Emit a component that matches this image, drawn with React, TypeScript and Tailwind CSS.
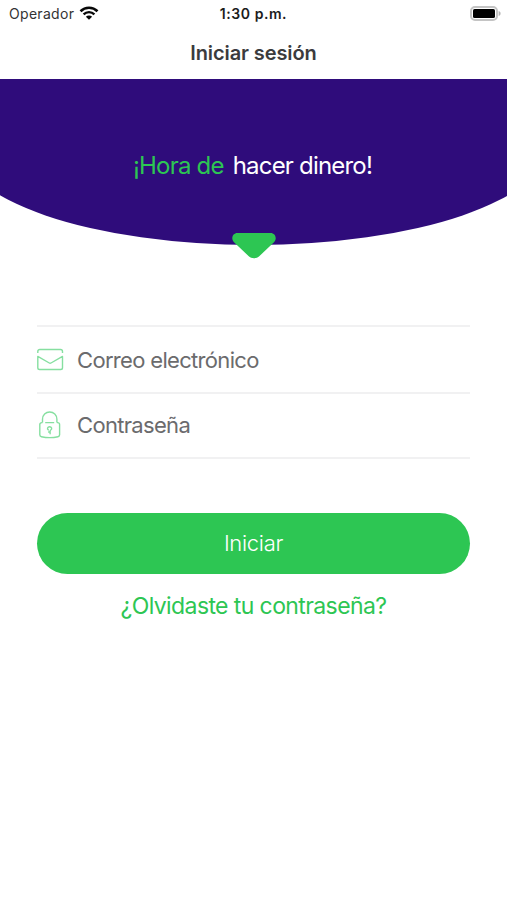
import type { ReactNode } from "react";

const fields = [
  { name: "email", label: "Correo electrónico", icon: <MailIcon />, row: "h-[67px]" },
  { name: "password", label: "Contraseña", icon: <LockIcon />, row: "h-[65px] pb-px" },
];

export default function App() {
  return (
    <main className="min-h-screen w-full overflow-hidden bg-white font-['Inter',sans-serif]">
      <StatusBar />

      <header className="flex h-[51px] items-center justify-center pb-[2px]">
        <h1 className="whitespace-nowrap text-[20px] font-semibold leading-6 tracking-[-0.1px] text-[#3b3b3d]">
          Iniciar sesión
        </h1>
      </header>

      <Hero />

      <form className="mx-[37px] mt-[80px]">
        <div className="border-t-2 border-[#f1f1f2]">
          {fields.map((field) => (
            <Field key={field.name} icon={field.icon} className={field.row}>
              {field.label}
            </Field>
          ))}
        </div>

        <button
          type="button"
          className="mt-[54px] flex h-[61px] w-full items-center justify-center rounded-full bg-[#2dc653] text-[22px] font-light tracking-[-0.3px] text-white"
        >
          Iniciar
        </button>

        <a
          href="#"
          className="mt-[16px] block whitespace-nowrap text-center text-[23px] leading-8 tracking-[-0.6px] text-[#2dc653]"
        >
          ¿Olvidaste tu contraseña?
        </a>
      </form>
    </main>
  );
}

function StatusBar() {
  return (
    <div className="grid h-7 grid-cols-3 items-center pl-[9px] pr-[6px] text-[14px] leading-none">
      <div className="flex items-center gap-[5px] text-[#333]">
        <span className="tracking-[0.3px]">Operador</span>
        <svg className="-mt-[2px]" width="20" height="14" viewBox="0 0 20 14" fill="none" aria-hidden="true">
          <path d="M1.5 5.2a12.2 12.2 0 0 1 17 0" stroke="#080808" strokeWidth="2.6" />
          <path d="M4.6 8.3a7.8 7.8 0 0 1 10.8 0" stroke="#080808" strokeWidth="2.4" />
          <path d="M10 13.8 6.9 10.7a4.4 4.4 0 0 1 6.2 0Z" fill="#080808" />
        </svg>
      </div>
      <span className="mr-[3px] whitespace-nowrap text-center font-semibold tracking-[0.55px] text-[#1c1c1c]">
        1:30 p.m.
      </span>
      <svg className="-mt-[2px] justify-self-end" width="31" height="15" viewBox="0 0 31 15" aria-hidden="true">
        <rect x="1" y="1" width="26" height="13" rx="4" fill="#fff" stroke="#c4c4c4" strokeWidth="2" />
        <rect x="3" y="3" width="22" height="9" rx="1.6" fill="#000" />
        <path d="M28.6 5c1.5.5 2 1.4 2 2.5s-.5 2-2 2.5Z" fill="#b4b4b4" />
      </svg>
    </div>
  );
}

function Hero() {
  return (
    <section className="relative flex h-[166px] justify-center">
      <div className="absolute inset-0 flex justify-center overflow-hidden">
        <div className="h-[165.5px] w-[590px] shrink-0 bg-[#2f0c7b] [border-radius:0_0_295px_295px/0_0_101px_101px]" />
      </div>
      <p className="relative mr-[2px] mt-[71px] flex h-8 gap-[9px] whitespace-nowrap text-[24px] leading-8 tracking-[-0.8px] text-white">
        <span className="text-[#2dc653]">¡Hora de</span>
        <span>hacer dinero!</span>
      </p>
      <svg
        className="absolute left-[232px] top-[153.5px]"
        width="44"
        height="26"
        viewBox="0 0 44 26"
        fill="#2dc653"
        aria-hidden="true"
      >
        <path d="M5.5 0H38.5C43.5 0 45.4 5.8 42 9.2L27.5 23C24.5 26 19.5 26 16.5 23L2 9.2C-1.4 5.8.5 0 5.5 0Z" />
      </svg>
    </section>
  );
}

function Field({ icon, className, children }: { icon: ReactNode; className: string; children: ReactNode }) {
  return (
    <label className={`flex items-center border-b-2 border-[#f1f1f2] ${className}`}>
      <span className="w-10 shrink-0">{icon}</span>
      <span className="whitespace-nowrap text-[22px] leading-8 tracking-[-0.68px] text-[#6b6b6d]">{children}</span>
    </label>
  );
}

function MailIcon() {
  return (
    <svg width="27" height="24" viewBox="0 0 27 24" fill="none" stroke="#86dfa0" strokeWidth="1.4" aria-hidden="true">
      <path d="M.8 5V3.4C.8 2.2 1.6 1.5 2.8 1.5h20.7c1.2 0 2 .7 2 1.9V5" />
      <path d="M.8 8.4v11.3c0 1.1.7 1.8 1.8 1.8h21.1c1.1 0 1.8-.7 1.8-1.8V8.4L14 15c-.6.4-1.1.4-1.7 0Z" strokeLinejoin="round" />
    </svg>
  );
}

function LockIcon() {
  return (
    <svg className="ml-[2px]" width="22" height="28" viewBox="0 0 22 28" fill="none" stroke="#86dfa0" strokeWidth="1.4" aria-hidden="true">
      <path d="M3.5 11.6V8.2a7.2 7.2 0 0 1 14.4 0v3.4" />
      <path d="M6.2 11.6h9M3.5 11.6H2.8c-1.2 0-2 .8-2 2v10.2c0 1 .6 1.7 1.6 1.9 5.5 1.2 11.2 1.2 16.6 0 1-.2 1.6-.9 1.6-1.9V13.6c0-1.2-.8-2-2-2h-.7" />
      <path d="M9.3 18.9c-1.6-1-.7-3.1 1.3-3.1s2.9 2.2 1.2 3.2c-.5.3-.7.6-.7 1.1v2.7M9.6 21h1.5" strokeLinecap="round" />
    </svg>
  );
}
